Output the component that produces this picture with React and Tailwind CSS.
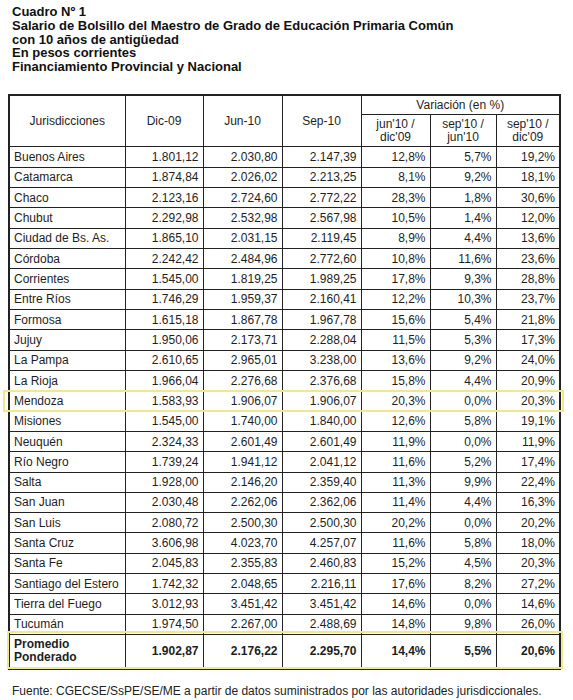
// Cuadro Nº 1 — salario de bolsillo, maestro de grado
import React from 'react'

const rows = [
    ['Buenos Aires', '1.801,12', '2.030,80', '2.147,39', '12,8%', '5,7%', '19,2%'],
    ['Catamarca', '1.874,84', '2.026,02', '2.213,25', '8,1%', '9,2%', '18,1%'],
    ['Chaco', '2.123,16', '2.724,60', '2.772,22', '28,3%', '1,8%', '30,6%'],
    ['Chubut', '2.292,98', '2.532,98', '2.567,98', '10,5%', '1,4%', '12,0%'],
    ['Ciudad de Bs. As.', '1.865,10', '2.031,15', '2.119,45', '8,9%', '4,4%', '13,6%'],
    ['Córdoba', '2.242,42', '2.484,96', '2.772,60', '10,8%', '11,6%', '23,6%'],
    ['Corrientes', '1.545,00', '1.819,25', '1.989,25', '17,8%', '9,3%', '28,8%'],
    ['Entre Ríos', '1.746,29', '1.959,37', '2.160,41', '12,2%', '10,3%', '23,7%'],
    ['Formosa', '1.615,18', '1.867,78', '1.967,78', '15,6%', '5,4%', '21,8%'],
    ['Jujuy', '1.950,06', '2.173,71', '2.288,04', '11,5%', '5,3%', '17,3%'],
    ['La Pampa', '2.610,65', '2.965,01', '3.238,00', '13,6%', '9,2%', '24,0%'],
    ['La Rioja', '1.966,04', '2.276,68', '2.376,68', '15,8%', '4,4%', '20,9%'],
    ['Mendoza', '1.583,93', '1.906,07', '1.906,07', '20,3%', '0,0%', '20,3%'],
    ['Misiones', '1.545,00', '1.740,00', '1.840,00', '12,6%', '5,8%', '19,1%'],
    ['Neuquén', '2.324,33', '2.601,49', '2.601,49', '11,9%', '0,0%', '11,9%'],
    ['Río Negro', '1.739,24', '1.941,12', '2.041,12', '11,6%', '5,2%', '17,4%'],
    ['Salta', '1.928,00', '2.146,20', '2.359,40', '11,3%', '9,9%', '22,4%'],
    ['San Juan', '2.030,48', '2.262,06', '2.362,06', '11,4%', '4,4%', '16,3%'],
    ['San Luis', '2.080,72', '2.500,30', '2.500,30', '20,2%', '0,0%', '20,2%'],
    ['Santa Cruz', '3.606,98', '4.023,70', '4.257,07', '11,6%', '5,8%', '18,0%'],
    ['Santa Fe', '2.045,83', '2.355,83', '2.460,83', '15,2%', '4,5%', '20,3%'],
    ['Santiago del Estero', '1.742,32', '2.048,65', '2.216,11', '17,6%', '8,2%', '27,2%'],
    ['Tierra del Fuego', '3.012,93', '3.451,42', '3.451,42', '14,6%', '0,0%', '14,6%'],
    ['Tucumán', '1.974,50', '2.267,00', '2.488,69', '14,8%', '9,8%', '26,0%'],
]

const total = ['1.902,87', '2.176,22', '2.295,70', '14,4%', '5,5%', '20,6%']

const cell = 'border border-[#222] px-[4px] py-0'

function App() {
    return (
        <div className="w-[573px] h-[700px] bg-white text-[#1e1e1e] text-[12px]" style={{ fontFamily: '"Liberation Sans", Arial, sans-serif' }}>

            {/* Title */}
            <div className="pt-[5px] pl-[12px] font-bold text-[13px] leading-[13.75px] text-[#111]">
                <div>Cuadro Nº 1</div>
                <div>Salario de Bolsillo del Maestro de Grado de Educación Primaria Común</div>
                <div>con 10 años de antigüedad</div>
                <div>En pesos corrientes</div>
                <div>Financiamiento Provincial y Nacional</div>
            </div>

            {/* Table */}
            <div className="relative mt-[20px]">
                <table className="ml-[8px] border-collapse border-2 border-[#222] table-fixed w-[551px] leading-[14px]">
                    <colgroup>
                        <col className="w-[116px]" />
                        <col className="w-[78px]" />
                        <col className="w-[79px]" />
                        <col className="w-[79px]" />
                        <col className="w-[69px]" />
                        <col className="w-[66px]" />
                        <col className="w-[64px]" />
                    </colgroup>
                    <thead>
                        <tr className="h-[20px]">
                            <th rowSpan={2} className={`${cell} font-normal text-center`}>Jurisdicciones</th>
                            <th rowSpan={2} className={`${cell} font-normal text-center`}>Dic-09</th>
                            <th rowSpan={2} className={`${cell} font-normal text-center`}>Jun-10</th>
                            <th rowSpan={2} className={`${cell} font-normal text-center`}>Sep-10</th>
                            <th colSpan={3} className={`${cell} font-normal text-center`}>Variación (en %)</th>
                        </tr>
                        <tr className="h-[32px]">
                            <th className={`${cell} font-normal text-center leading-[13px]`}>jun'10 /<br />dic'09</th>
                            <th className={`${cell} font-normal text-center leading-[13px]`}>sep'10 /<br />jun'10</th>
                            <th className={`${cell} font-normal text-center leading-[13px]`}>sep'10 /<br />dic'09</th>
                        </tr>
                    </thead>
                    <tbody>
                        {rows.map(r => (
                            <tr key={r[0]} className="h-[20.33px]">
                                <td className={`${cell} text-left`}>{r[0]}</td>
                                {r.slice(1).map((v, i) => (
                                    <td key={i} className={`${cell} text-right`}>{v}</td>
                                ))}
                            </tr>
                        ))}
                        <tr className="h-[34px] font-bold">
                            <td className={`${cell} text-left leading-[13px]`}>Promedio<br />Ponderado</td>
                            {total.map((v, i) => (
                                <td key={i} className={`${cell} text-right`}>{v}</td>
                            ))}
                        </tr>
                    </tbody>
                </table>

                {/* yellow highlight boxes */}
                <div className="absolute left-[3px] top-[296px] w-[561px] h-[22px] border-2 border-[#efe88c] pointer-events-none" />
                <div className="absolute left-[7px] top-[537px] w-[556px] h-[38px] border-2 border-[#efe88c] pointer-events-none" />
            </div>

            {/* Source */}
            <div className="pl-[12px] mt-[12px] text-[#222]">
                Fuente: CGECSE/SsPE/SE/ME a partir de datos suministrados por las autoridades jurisdiccionales.
            </div>
        </div>
    )
}

export default App
